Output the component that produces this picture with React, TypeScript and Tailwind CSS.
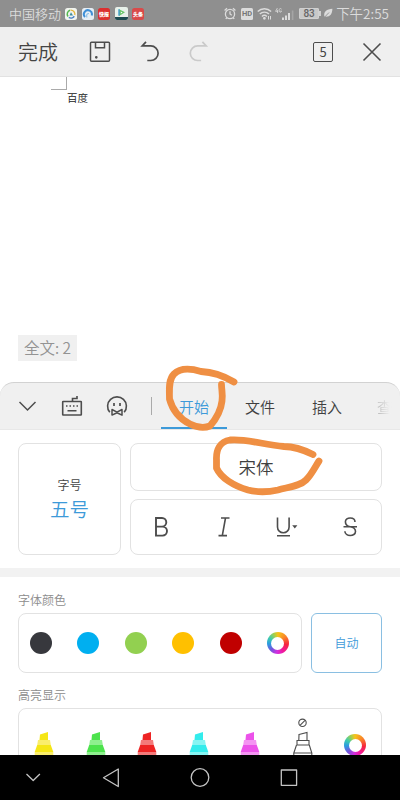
import React from 'react';

const FONT = "font-['Noto_Sans_CJK_SC',sans-serif] font-[350]";

const StatusBar: React.FC = () => (
    <div className="h-[27px] shrink-0 bg-[#8f8f8f] flex items-center pl-[9px] pr-[11px] text-[#dcdcdc]">
        <span className="text-[13px] leading-none w-[53px] whitespace-nowrap">中国移动</span>
        <div className="flex items-center gap-[4.5px] ml-[3px]">
            <svg width="12" height="12" viewBox="0 0 12 12">
                <rect width="12" height="12" rx="2.5" fill="#f1f4ef" />
                <path d="M3 8.5A4 4 0 0 1 5 2.3" stroke="#55b84f" strokeWidth="1.5" fill="none" />
                <path d="M5.5 2.2A4 4 0 0 1 9.8 7" stroke="#e3b53b" strokeWidth="1.3" fill="none" />
                <path d="M9.3 8.3A4 4 0 0 1 3.8 9.3" stroke="#4b83c8" strokeWidth="1.5" fill="none" />
                <path d="M4.5 7.5 6 4.2l2 3.3z" fill="#3f8e9d" />
            </svg>
            <svg width="12" height="12" viewBox="0 0 12 12">
                <rect width="12" height="12" rx="2.5" fill="#e6eef5" />
                <path d="M3 9A4 4 0 1 1 9.7 7.5" stroke="#3f8fd6" strokeWidth="2" fill="none" />
                <path d="M5 9.5C4 7 5 5.5 7 5.5" stroke="#8cc0e8" strokeWidth="1.2" fill="none" />
            </svg>
            <div className="w-3 h-3 rounded-[2.5px] bg-[#dc2f2f] flex items-center justify-center">
                <span className="text-[5px] leading-none font-black text-white whitespace-nowrap">快报</span>
            </div>
            <svg width="13" height="13" viewBox="0 0 13 13">
                <rect width="13" height="13" rx="2" fill="#e8f1ea" />
                <path d="M0 10h13v1a2 2 0 0 1-2 2H2a2 2 0 0 1-2-2z" fill="#1c4a50" />
                <path d="M4 2.2 10 5.3 4 9z" fill="#65c466" />
                <path d="M4 2.2v6.5" stroke="#3f9bd0" strokeWidth="1.4" />
                <path d="M5.8 4.5 7.5 5.4 5.8 6.5z" fill="#fff" />
            </svg>
            <div className="w-3 h-3 rounded-[2.5px] bg-[#d94a4a] flex items-center justify-center">
                <span className="text-[5px] leading-none font-black text-white whitespace-nowrap">头条</span>
            </div>
        </div>
        <div className="ml-auto flex items-center">
            <svg width="12" height="13" viewBox="0 0 12 13" fill="none" stroke="#dcdcdc" strokeWidth="1.3">
                <circle cx="6" cy="7" r="4.6" />
                <path d="M6 4.3V7l1.8 1.2M.6 3.4 3 1.2M11.4 3.4 9 1.2M2.8 10.6l-1 1.3M9.2 10.6l1 1.3" />
            </svg>
            <div className="ml-[5px] w-3 h-[12px] rounded-[1.5px] bg-[#dcdcdc] flex items-center justify-center">
                <span className="text-[7.5px] leading-none font-bold text-[#777] font-['Roboto',sans-serif]">HD</span>
            </div>
            <svg className="ml-1" width="15" height="13" viewBox="0 0 15 13" fill="none" stroke="#dcdcdc" strokeWidth="1.4">
                <path d="M.7 4.5a9.5 9.5 0 0 1 13.4 0M2.8 7a6.5 6.5 0 0 1 9.2 0M4.9 9.4a3.6 3.6 0 0 1 5 0" />
                <circle cx="7.4" cy="11.3" r=".7" fill="#dcdcdc" />
                <path d="M11.5 9v3.5M13.5 9v3.5" strokeWidth="1" />
            </svg>
            <svg className="ml-[3px]" width="20" height="14" viewBox="0 0 20 14" fill="#dcdcdc">
                <path d="M2.4 1 .6 4.3h2.6M2.6 2.8V6M6.6 2.2C5 .7 4 2 4.2 3.6c0 2 2 2 2.4.4H5.4" fill="none" stroke="#dcdcdc" strokeWidth=".8" />
                <path d="M7 10.5h2V13H7zM10 8.5h2V13h-2zM13 6h2v7h-2z" />
                <path d="M16.8 3.5h1.6V13h-1.6z" opacity=".3" />
            </svg>
            <div className="ml-1 w-5 h-[11px] border border-[#d0d0d0] rounded-[1px] bg-[#c8c8c8] flex items-center justify-center">
                <span className="text-[10px] leading-none font-medium text-[#666] font-['Roboto',sans-serif]">83</span>
            </div>
            <div className="w-[2px] h-[5px] bg-[#d0d0d0]" />
            <svg className="ml-[2px]" width="10" height="11" viewBox="0 0 10 11">
                <path d="M9.4.8C3.5 1.3.5 3.5 1.3 8.6 6.7 9.3 9.2 6.5 9.4.8z" fill="#dcdcdc" />
                <path d="M.4 10.4 6 4.5" stroke="#8f8f8f" strokeWidth=".9" />
            </svg>
            <span className="ml-[3px] text-[13.5px] leading-none whitespace-nowrap">下午2:55</span>
        </div>
    </div>
);

const Toolbar: React.FC = () => (
    <div className="h-[50px] shrink-0 bg-[#efefef] border-b border-[#e2e2e2] flex items-center pl-[18px] pr-[18px] text-[#444]">
        <span className="text-[20px] leading-none w-10 whitespace-nowrap">完成</span>
        <svg className="ml-[31px]" width="22" height="22" viewBox="0 0 22 22" fill="none" stroke="#4d4d4d" strokeWidth="1.5">
            <rect x="1.5" y="1.2" width="19" height="19" rx="1" />
            <path d="M6.5 1.2v5.5h9V1.2" />
            <circle cx="7.3" cy="16.3" r=".6" fill="#4d4d4d" />
        </svg>
        <svg className="ml-[29px]" width="20" height="22" viewBox="0 0 20 22" fill="none" stroke="#4d4d4d" strokeWidth="1.7">
            <path d="M6 .8 2.2 4.9h8.600a7.300 7.300 0 0 1 0 14.600H7.300" />
        </svg>
        <svg className="ml-[29px]" width="20" height="22" viewBox="0 0 20 22" fill="none" stroke="#cacaca" strokeWidth="1.7">
            <path d="M13.400 .8 17.200 4.900H8.600a7.300 7.300 0 0 0 0 14.600H12.100" />
        </svg>
        <div className="ml-auto w-5 h-5 border-[1.5px] border-[#4d4d4d] rounded-[2px] flex items-center justify-center">
            <span className="text-[13px] leading-none font-normal">5</span>
        </div>
        <svg className="ml-[29px]" width="20" height="20" viewBox="0 0 20 20" stroke="#4d4d4d" strokeWidth="1.6">
            <path d="M1.5 1.5l17 17M18.5 1.5l-17 17" />
        </svg>
    </div>
);

const DocumentArea: React.FC = () => (
    <div className="h-[305px] shrink-0 flex flex-col items-start">
        <div className="ml-[51px] w-4 h-[13px] border-r border-b border-[#aaa]" />
        <span className="ml-[67px] mt-[2px] text-[10.5px] leading-[11px] text-[#222]">百度</span>
        <div className="mt-auto mb-[21px] ml-[18px] w-[59px] h-[26px] bg-[#f0f0f0] flex items-center justify-center">
            <span className="text-[15.5px] leading-none text-[#939393] whitespace-nowrap">全文: 2</span>
        </div>
    </div>
);

const TabBar: React.FC = () => (
    <div className="h-12 shrink-0 bg-[#f0f0f0] border-t border-[#d2d2d2] border-b border-b-[#e8e8e8] rounded-t-[14px] flex items-center text-[15px] leading-none text-[#3f3f3f] whitespace-nowrap">
        <svg className="ml-[18px] shrink-0" width="19" height="12" viewBox="0 0 19 12" fill="none" stroke="#4d4d4d" strokeWidth="1.5">
            <path d="M1.5 2l8 8 8-8" />
        </svg>
        <svg className="ml-[24px] shrink-0" width="22" height="22" viewBox="0 0 22 22" fill="none" stroke="#4d4d4d" strokeWidth="1.6">
            <rect x="1.7" y="6.500" width="18.6" height="13.500" rx=".5" />
            <path d="M11.5 6.500V3.500h4.500V1M6.500 15.700h9" />
            <path d="M5 11h12.500" strokeDasharray="1.5 2" />
        </svg>
        <svg className="ml-[23px] shrink-0" width="22" height="22" viewBox="0 0 22 22" fill="none" stroke="#4d4d4d" strokeWidth="1.6">
            <path d="M3.800 17.300A9.400 9.400 0 1 1 18.200 17.300" />
            <path d="M8 8v3M14 8v3" strokeWidth="1.7" />
            <path d="M6 14.500v5.600l5-2.400 5 2.400v-5.600l-5 2.600z" strokeLinejoin="round" strokeWidth="1.500" />
        </svg>
        <div className="ml-[23px] w-px h-[18px] shrink-0 bg-[#aaa]" />
        <div className="ml-[9px] w-[66px] h-full shrink-0 flex items-center justify-center pt-[2px] border-b-[2px] border-[#3d9ad9] text-[#3d9ad9]">开始</div>
        <span className="ml-[18px]">文件</span>
        <span className="ml-[37px]">插入</span>
        <span className="ml-[35px] shrink-0 py-1 bg-linear-to-r from-[#b8b8b8] to-[#f0f0f0] to-85% bg-clip-text text-transparent">查</span>
    </div>
);

const FontPanel: React.FC = () => (
    <div className="h-[138px] shrink-0 flex gap-[9px] px-[18px] pt-[13px] pb-3">
        <div className="w-[103px] h-[112px] border border-[#e2e2e2] rounded-[8px] flex flex-col items-center justify-center">
            <span className="text-[12px] leading-none text-[#444]">字号</span>
            <span className="mt-[8px] mb-[1px] text-[19.5px] leading-none text-[#3d9ad9]">五号</span>
        </div>
        <div className="flex-1 flex flex-col gap-2">
            <div className="h-12 border border-[#e2e2e2] rounded-[8px] flex items-center justify-center">
                <span className="text-[17.5px] leading-none text-[#3f3f3f]">宋体</span>
            </div>
            <div className="h-14 border border-[#e2e2e2] rounded-[8px] flex items-center">
                <svg className="w-full" height="30" viewBox="0 0 250 30" fill="none" stroke="#4d4d4d" strokeWidth="1.9">
                    <path d="M25 6h6a4.3 4.3 0 0 1 0 8.6h-6zM25 14.6h6.5a4.5 4.5 0 0 1 0 9H25z" />
                    <path d="M90 6h8.5M87.5 23.6H96M94.5 6l-3.2 17.6" strokeWidth="1.6" />
                    <path d="M146.5 5.5v9.500a5.800 5.800 0 0 0 11.600 0V5.500M146 23.800h13" strokeWidth="1.6" />
                    <path d="M161.200 13.300h5.200l-2.600 3.200z" fill="#4d4d4d" stroke="none" />
                    <path d="M224 10c0-5.300-9.600-5.300-9.600-.2 0 3 2.400 4.500 4.800 5 2.800.5 5.300 1.900 5.300 4.600 0 5.500-10.600 5.500-10.600-.2M212.500 14.800h13.500" strokeWidth="1.6" />
                </svg>
            </div>
        </div>
    </div>
);

const ColorWheel: React.FC = () => (
    <div className="w-[22px] h-[22px] shrink-0 rounded-full flex items-center justify-center bg-[conic-gradient(#f6c319,#f98329_50deg,#f5243f_100deg,#f018a0_150deg,#d42de0_185deg,#7355dd_225deg,#2c9be0_265deg,#3dcbae_300deg,#a4cf4c_335deg,#f6c319)]">
        <div className="w-[13px] h-[13px] rounded-full bg-white" />
    </div>
);

const swatches = ['bg-[#37383d]', 'bg-[#00aff0]', 'bg-[#92d050]', 'bg-[#ffc000]', 'bg-[#c00000]'];

const FontColors: React.FC = () => (
    <div className="shrink-0 px-[18px] pt-[16px]">
        <div className="text-[12px] leading-[14px] text-[#8c8c8c]">字体颜色</div>
        <div className="mt-[6px] flex gap-[9px]">
            <div className="w-[284px] h-[60px] border border-[#e2e2e2] rounded-[8px] flex items-center justify-between pl-[11px] pr-[12px]">
                {swatches.map((color) => (
                    <div key={color} className={`w-[22px] h-[22px] rounded-full ${color}`} />
                ))}
                <ColorWheel />
            </div>
            <div className="flex-1 h-[60px] border border-[#8abfe2] rounded-[6px] flex items-center justify-center">
                <span className="text-[12px] leading-none text-[#3d9ad9]">自动</span>
            </div>
        </div>
    </div>
);

const markers = [
    { dark: '#f5e616', light: '#faee6c' },
    { dark: '#4de34d', light: '#8ff08f' },
    { dark: '#ee2424', light: '#f47a7a' },
    { dark: '#33ecec', light: '#86f5f3' },
    { dark: '#ec52ea', light: '#f494f2' },
];

const Marker: React.FC<{ dark: string; light: string }> = ({ dark, light }) => (
    <svg className="shrink-0" width="20" height="24" viewBox="0 0 20 24">
        <path d="M6 2.5 14 0v8H5.5z" fill={dark} />
        <path d="M4 8h12l.8 5H3.2z" fill={light} />
        <path d="M3.2 13h13.6l2.5 7H.7z" fill={dark} />
        <path d="M.7 20h18.600V24H.7z" fill={light} />
    </svg>
);

const Highlights: React.FC = () => (
    <div className="flex-1 min-h-0 overflow-hidden px-[18px] pt-[15px]">
        <div className="text-[12px] leading-[14px] text-[#8c8c8c]">高亮显示</div>
        <div className="mt-[6px] h-[80px] border border-[#e2e2e2] rounded-[8px] flex items-start justify-between px-[15px] pt-[23px]">
            {markers.map((m) => (
                <Marker key={m.dark} dark={m.dark} light={m.light} />
            ))}
            <svg className="-mt-[14px] ml-px shrink-0" width="20" height="38" viewBox="0 0 20 38" fill="none" stroke="#4d4d4d" strokeWidth="1.1">
                <circle cx="9.5" cy="4.8" r="3.7" />
                <path d="M7 7.3l5-5" />
                <path d="M6 16.5 14 14.5V22.500H5.800zM4 22.500h12v4.500H4zM3.500 27 .8 35h18L16.300 27M.8 35v4M18.800 35v4" />
            </svg>
            <div className="mt-[2px]">
                <ColorWheel />
            </div>
        </div>
    </div>
);

const NavBar: React.FC = () => (
    <div className="h-[45px] shrink-0 bg-black">
        <svg width="400" height="45" viewBox="0 0 400 45" fill="none" stroke="#c4c4c4" strokeWidth="1.3" strokeLinejoin="round">
            <path d="M26.5 19l6.7 6.5 6.7-6.5" />
            <path d="M118.3 14v17.5l-14.8-8.7z" />
            <circle cx="200" cy="22.5" r="8.8" />
            <rect x="281.3" y="15" width="15.3" height="15.3" />
        </svg>
    </div>
);

// Hand-drawn circles around the tab and the font name
const Annotations: React.FC = () => (
    <svg className="absolute inset-0 pointer-events-none" width="400" height="800" viewBox="0 0 400 800" fill="none" stroke="#ef8f43" strokeWidth="6.8" strokeLinecap="round" strokeLinejoin="round">
        <path d="M234 382C224 376 212 372 201 371.5C191 368.5 180 368 174 374C168 380 169.5 391 169.5 399C173 412 182 420 190 424C197 427.5 205 428 210 426C216 419 221 410 222 401C223 394 221.5 390 221.5 384.5" />
        <path d="M313 454.5C304 450 295 446.5 284 446.5C264 445 247 438.5 230 440C220 441.5 216 450 216.5 460V468C221 478 234 486 248 490C258 492.5 269 492 278 490C289 487 300 486 306 480C312 474 315 467 319 461" />
    </svg>
);

export default function App() {
    return (
        <div className={`relative w-[400px] h-[800px] overflow-hidden bg-white flex flex-col ${FONT}`}>
            <StatusBar />
            <Toolbar />
            <DocumentArea />
            <TabBar />
            <FontPanel />
            <div className="h-[9px] shrink-0 bg-[#f2f2f2]" />
            <FontColors />
            <Highlights />
            <NavBar />
            <Annotations />
        </div>
    );
}
